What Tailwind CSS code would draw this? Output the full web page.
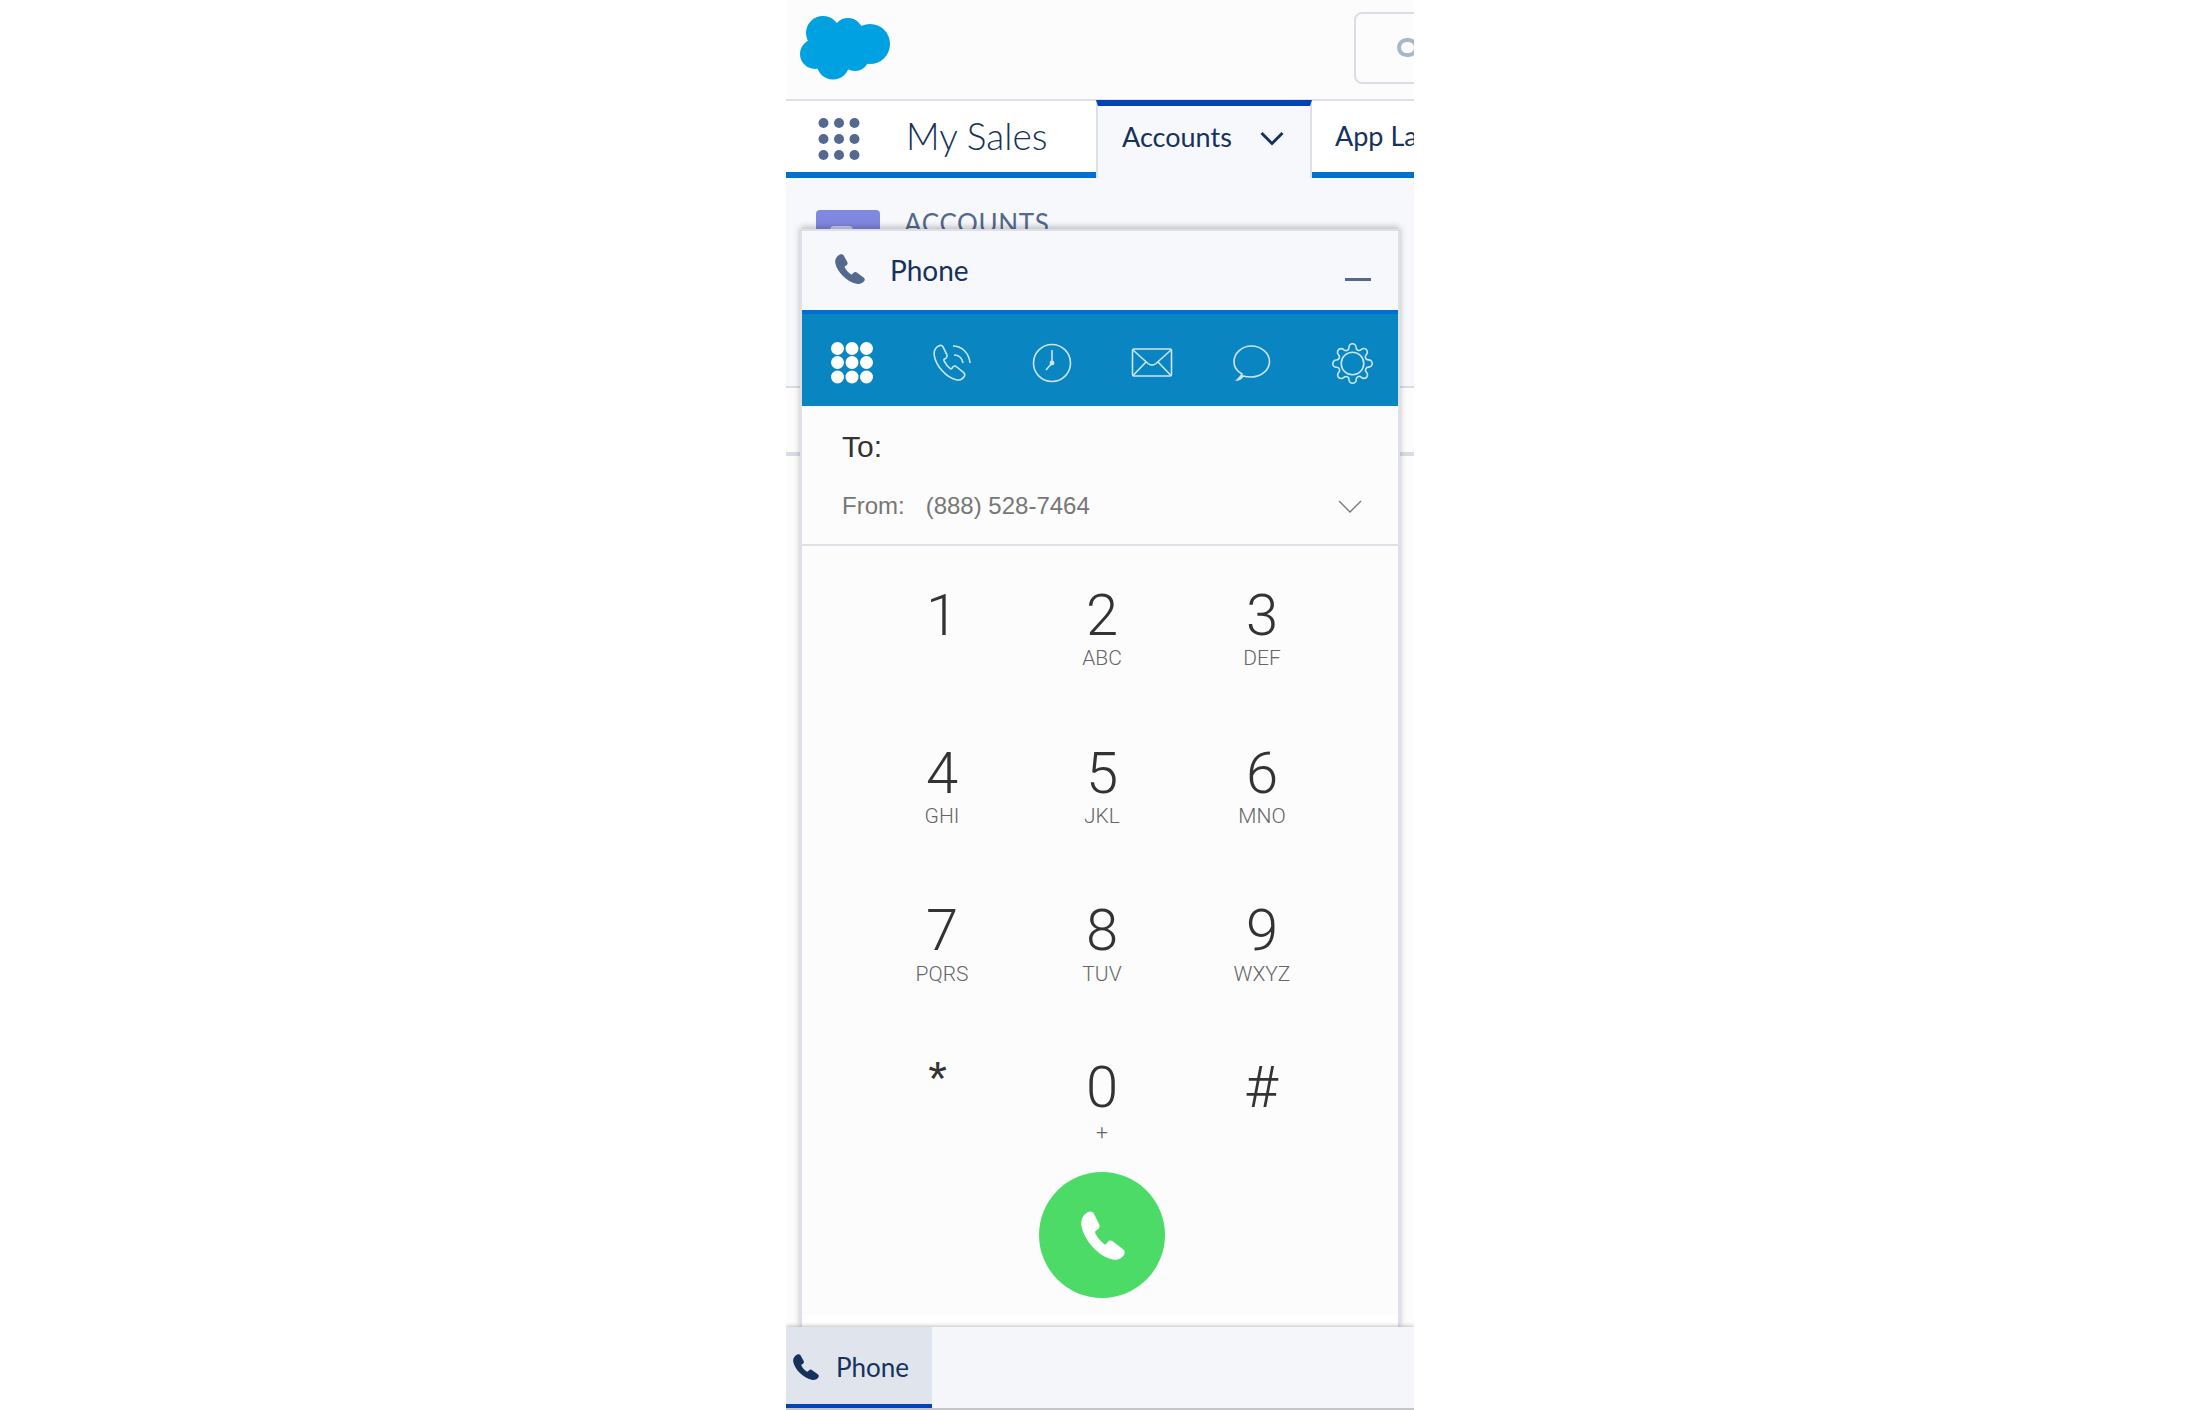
<!DOCTYPE html>
<html lang="en">
 <head>
  <meta charset="UTF-8" />
  <meta name="viewport" content="width=device-width, initial-scale=1.0" />
  <script src="https://cdn.jsdelivr.net/npm/@tailwindcss/browser@4"></script>
  <title>My Sales - Phone</title>
 </head>
 <body class="bg-white font-[Lato] text-[#16325c] overflow-hidden">
  <div class="flex justify-center w-full h-[1410px]">
   <div class="relative flex flex-col w-[628px] h-[1410px] overflow-hidden bg-[#fcfcfd]">

    <!-- top header -->
    <header class="flex justify-between h-[99px] shrink-0 bg-[#fcfcfd]">
     <svg class="ml-[13px] mt-[15px] w-[93px] h-[66px]" viewBox="799 15 93 66" fill="#00a1e0">
      <circle cx="823" cy="33" r="17" /><circle cx="848" cy="33" r="15" /><circle cx="870" cy="44" r="20" />
      <circle cx="815" cy="54" r="15" /><circle cx="833" cy="63" r="16.5" /><circle cx="855" cy="57" r="14" />
      <rect x="815" y="32" width="45" height="28" />
     </svg>
     <div class="mt-[12px] -mr-[20px] w-[80px] h-[72px] flex items-center pl-[41px] pb-[2px] border-2 border-[#d8dde6] rounded-lg">
      <div class="w-[21px] h-[19px] shrink-0 rounded-full border-4 border-[#a8b7c7]"></div>
     </div>
    </header>

    <!-- nav -->
    <nav class="flex h-[79px] shrink-0 bg-white border-t-2 border-[#dde0e6]">
     <div class="flex items-center w-[310px] border-b-[6px] border-[#0070d2] pb-[2px]">
      <svg class="ml-[32px] mt-[7px] w-[42px] h-[42px]" viewBox="0 0 42 42" fill="#54698d">
       <circle cx="5.5" cy="5" r="5" /><circle cx="21" cy="5" r="5" /><circle cx="36.5" cy="5" r="5" />
       <circle cx="5.5" cy="21" r="5" /><circle cx="21" cy="21" r="5" /><circle cx="36.5" cy="21" r="5" />
       <circle cx="5.5" cy="37" r="5" /><circle cx="21" cy="37" r="5" /><circle cx="36.5" cy="37" r="5" />
      </svg>
      <span class="ml-[46px] text-[37px] leading-none font-light whitespace-nowrap">My Sales</span>
     </div>
     <div class="flex items-center w-[216px] -mt-[1px] pb-[12px] bg-[#f7f8fb] border-t-[6px] border-t-[#0343b8] border-x-2 border-x-[#dde0e6]">
      <span class="ml-[24px] text-[27px] leading-none whitespace-nowrap">Accounts</span>
      <svg class="ml-[28px] mt-[5px] w-[24px] h-[15px]" viewBox="0 0 24 15" fill="none" stroke="#16325c" stroke-width="3"><path d="M1.5 2 12 12.5 22.5 2" /></svg>
     </div>
     <div class="flex items-center flex-1 border-b-[6px] border-[#0070d2] pb-[2px] overflow-hidden">
      <span class="ml-[23px] text-[27px] leading-none whitespace-nowrap">App Launcher</span>
     </div>
    </nav>

    <!-- page behind the phone panel -->
    <main class="relative flex-1 flex flex-col">
     <div class="flex h-[210px] shrink-0 pl-[30px] pt-[32px] bg-[#f7f8fb] border-b-2 border-[#d8dce6]">
      <div class="relative w-[64px] h-[40px] rounded bg-[#8088e0]">
       <div class="absolute left-[14px] top-[16px] w-[23px] h-[8px] rounded-sm bg-white/60"></div>
      </div>
      <span class="ml-[24px] -mt-[5px] text-[26px] leading-[36px] tracking-wide text-[#54698d]">ACCOUNTS</span>
     </div>
     <div class="h-[68px] shrink-0 border-b-4 border-[#d8dce6]"></div>

     <!-- phone panel -->
     <section class="absolute left-[14px] top-[51px] w-[600px] h-[1100px] flex flex-col border-2 border-[#dde0e8] rounded-t bg-white shadow-[0_-2px_6px_rgba(0,0,0,0.25)]">
      <div class="flex items-center h-[79px] shrink-0 bg-[#f7f8fb]">
       <svg class="ml-[33px] mb-[4px] w-[30px] h-[30px]" viewBox="0 0 30 30" fill="#54698d"><path d="M4.5.8C6.5-.2 8.2.5 9 2l3.3 6c.7 1.3.3 2.6-1 3.4l-1.3.8c-.5.3-.5.8-.2 1.4 1.5 2.8 3.4 4.8 6 6.6.6.4 1.1.3 1.5-.2l1-1.1c1-1.1 2.4-1.2 3.5-.3l6.8 4.8c1.4 1.1 1.6 2.6.4 3.9-2 2.3-4.5 3-7.5 2.4C12 27.8 2 18 .3 9-.3 5.6 1.3 2.5 4.5.8Z" /></svg>
       <span class="ml-[25px] mb-[2px] text-[28px] leading-none">Phone</span>
       <div class="ml-auto mr-[27px] mt-[18px] w-[26px] h-[3px] bg-[#54698d]"></div>
      </div>

      <!-- toolbar -->
      <div class="flex items-center h-[96px] shrink-0 pt-[6px] bg-[#0985c1] border-t-4 border-[#0070d2] overflow-visible">
       <div class="flex justify-center w-[100px] shrink-0">
        <svg class="w-[42px] h-[42px]" viewBox="0 0 42 42" fill="#fff">
         <circle cx="6.5" cy="6.5" r="6.5" /><circle cx="21" cy="6.5" r="6.5" /><circle cx="35.5" cy="6.5" r="6.5" />
         <circle cx="6.5" cy="20.5" r="6.5" /><circle cx="21" cy="20.5" r="6.5" /><circle cx="35.5" cy="20.5" r="6.5" />
         <circle cx="6.5" cy="35" r="6.5" /><circle cx="21" cy="35" r="6.5" /><circle cx="35.5" cy="35" r="6.5" />
        </svg>
       </div>
       <div class="flex justify-center w-[100px] shrink-0">
        <svg class="w-[38px] h-[38px]" viewBox="0 0 38 38" fill="none" stroke="#cde5f1" stroke-width="1.6">
         <path vector-effect="non-scaling-stroke" transform="translate(1 1) scale(1.03 1.17)" d="M4.5.8C6.5-.2 8.2.5 9 2l3.3 6c.7 1.3.3 2.6-1 3.4l-1.3.8c-.5.3-.5.8-.2 1.4 1.5 2.8 3.4 4.8 6 6.6.6.4 1.1.3 1.5-.2l1-1.1c1-1.1 2.4-1.2 3.5-.3l6.8 4.8c1.4 1.1 1.6 2.6.4 3.9-2 2.3-4.5 3-7.5 2.4C12 27.8 2 18 .3 9-.3 5.6 1.3 2.5 4.5.8Z" />
         <path d="M20 2C29 2 36 9 37 19" /><path d="M21 11C26 11 29 14 30 19" />
        </svg>
       </div>
       <div class="flex justify-center w-[100px] shrink-0">
        <svg class="w-[40px] h-[40px]" viewBox="0 0 40 40" fill="none" stroke="#cde5f1" stroke-width="1.6">
         <circle cx="20" cy="20" r="18.5" /><path d="M20 7V20L14 27" /><circle cx="20" cy="20" r="1.6" fill="#cde5f1" />
        </svg>
       </div>
       <div class="flex justify-center w-[100px] shrink-0">
        <svg class="w-[42px] h-[30px]" viewBox="0 0 42 30" fill="none" stroke="#cde5f1" stroke-width="1.6">
         <rect x="1.5" y="1" width="39" height="27" rx="1.5" />
         <path d="M2 2 17 15.5C19.5 17.5 22.5 17.5 25 15.5L40 2M2 27.5 15 14M40 27.5 27 14" />
        </svg>
       </div>
       <div class="flex justify-center w-[100px] shrink-0">
        <svg class="w-[38px] h-[36px]" viewBox="0 0 38 36" fill="none" stroke="#cde5f1" stroke-width="1.6">
         <path d="M9 29C3.5 26 1 21 1 17 1 8 9 1 18.5 1 28 1 36.5 8 36.5 16.5 36.5 25 28 32 18.5 32 15 32 12 31.6 10 31 8.5 33 7 35 4 35 6 33 8.5 31 9 29Z" />
        </svg>
       </div>
       <div class="flex justify-center w-[100px] shrink-0">
        <svg class="w-[43px] h-[43px]" viewBox="0 0 24 24" fill="none" stroke="#cde5f1" stroke-width="0.9">
         <circle cx="12" cy="12" r="6.3" />
         <path d="M19.4 15a1.65 1.65 0 0 0 .33 1.82l.06.06a2 2 0 0 1 0 2.83 2 2 0 0 1-2.83 0l-.06-.06a1.65 1.65 0 0 0-1.82-.33 1.65 1.65 0 0 0-1 1.51V21a2 2 0 0 1-2 2 2 2 0 0 1-2-2v-.09A1.65 1.65 0 0 0 9 19.4a1.65 1.65 0 0 0-1.82.33l-.06.06a2 2 0 0 1-2.83 0 2 2 0 0 1 0-2.83l.06-.06a1.65 1.65 0 0 0 .33-1.82 1.65 1.65 0 0 0-1.51-1H3a2 2 0 0 1-2-2 2 2 0 0 1 2-2h.09A1.65 1.65 0 0 0 4.6 9a1.65 1.65 0 0 0-.33-1.82l-.06-.06a2 2 0 0 1 0-2.83 2 2 0 0 1 2.83 0l.06.06a1.65 1.65 0 0 0 1.82.33H9a1.65 1.65 0 0 0 1-1.51V3a2 2 0 0 1 2-2 2 2 0 0 1 2 2v.09a1.65 1.65 0 0 0 1 1.51 1.65 1.65 0 0 0 1.82-.33l.06-.06a2 2 0 0 1 2.83 0 2 2 0 0 1 0 2.83l-.06.06a1.65 1.65 0 0 0-.33 1.82V9a1.65 1.65 0 0 0 1.51 1H21a2 2 0 0 1 2 2 2 2 0 0 1-2 2h-.09a1.65 1.65 0 0 0-1.51 1z" />
        </svg>
       </div>
      </div>

      <!-- number fields -->
      <div class="flex flex-col shrink-0 bg-[#fcfcfc] border-b-2 border-[#dfe1e6] font-['Liberation_Sans']">
       <div class="flex items-center h-[78px] pl-[40px] pt-[2px] text-[30px] text-[#333]">To:</div>
       <div class="flex items-center h-[60px] pl-[40px] pb-[16px] text-[24px] text-[#777]">
        <span>From:</span>
        <span class="ml-[21px]">(888) 528-7464</span>
        <svg class="ml-auto mr-[36px] w-[24px] h-[13px]" viewBox="0 0 24 13" fill="none" stroke="#777" stroke-width="1.4"><path d="M1 1 12 12 23 1" /></svg>
       </div>
      </div>

      <!-- keypad -->
      <div class="flex flex-col items-center flex-1 bg-[#fcfcfc] font-[Roboto] pt-[39px] pl-[4px]">
       <div class="grid grid-cols-[160px_160px_160px] grid-rows-[158px_158px_158px_113px] text-center">
        <div><div class="text-[58px] leading-[60px] font-light text-[#333]">1</div></div>
        <div><div class="text-[58px] leading-[60px] font-light text-[#333]">2</div><div class="mt-[1px] text-[21px] leading-[24px] font-light text-[#666]">ABC</div></div>
        <div><div class="text-[58px] leading-[60px] font-light text-[#333]">3</div><div class="mt-[1px] text-[21px] leading-[24px] font-light text-[#666]">DEF</div></div>
        <div><div class="text-[58px] leading-[60px] font-light text-[#333]">4</div><div class="mt-[1px] text-[21px] leading-[24px] font-light text-[#666]">GHI</div></div>
        <div><div class="text-[58px] leading-[60px] font-light text-[#333]">5</div><div class="mt-[1px] text-[21px] leading-[24px] font-light text-[#666]">JKL</div></div>
        <div><div class="text-[58px] leading-[60px] font-light text-[#333]">6</div><div class="mt-[1px] text-[21px] leading-[24px] font-light text-[#666]">MNO</div></div>
        <div><div class="-mt-[1px] text-[58px] leading-[60px] font-light text-[#333]">7</div><div class="mt-[2px] text-[21px] leading-[24px] font-light text-[#666]">PQRS</div></div>
        <div><div class="-mt-[1px] text-[58px] leading-[60px] font-light text-[#333]">8</div><div class="mt-[2px] text-[21px] leading-[24px] font-light text-[#666]">TUV</div></div>
        <div><div class="-mt-[1px] text-[58px] leading-[60px] font-light text-[#333]">9</div><div class="mt-[2px] text-[21px] leading-[24px] font-light text-[#666]">WXYZ</div></div>
        <div class="pr-[9px]"><div class="-mt-[10px] font-['Liberation_Sans'] text-[48px] leading-[60px] text-[#333]">*</div></div>
        <div><div class="-mt-[2px] text-[58px] leading-[60px] font-light text-[#333]">0</div><div class="mt-[3px] text-[21px] leading-[24px] font-light text-[#666]">+</div></div>
        <div class="pr-[2px]"><div class="-mt-[2px] text-[58px] leading-[60px] font-light text-[#333]">#</div></div>
       </div>
       <div class="flex items-center justify-center w-[126px] h-[126px] shrink-0 rounded-full bg-[#4cdb67]">
        <svg class="ml-[2px] w-[44px] h-[49px]" viewBox="0 0 30 30" preserveAspectRatio="none" fill="#fff"><path d="M4.5.8C6.5-.2 8.2.5 9 2l3.3 6c.7 1.3.3 2.6-1 3.4l-1.3.8c-.5.3-.5.8-.2 1.4 1.5 2.8 3.4 4.8 6 6.6.6.4 1.1.3 1.5-.2l1-1.1c1-1.1 2.4-1.2 3.5-.3l6.8 4.8c1.4 1.1 1.6 2.6.4 3.9-2 2.3-4.5 3-7.5 2.4C12 27.8 2 18 .3 9-.3 5.6 1.3 2.5 4.5.8Z" /></svg>
       </div>
       <div class="h-[16px] shrink-0"></div>
      </div>
      <div class="h-[12px] shrink-0 bg-white"></div>
     </section>
    </main>

    <!-- utility bar -->
    <footer class="relative z-10 flex h-[83px] shrink-0 bg-[#f4f6fa] border-b-2 border-[#c4c6ca] shadow-[0_-1px_4px_rgba(0,0,0,0.25)]">
     <div class="flex items-center w-[146px] bg-[#e0e4ed] border-b-4 border-[#0343b8]">
      <svg class="ml-[7px] mt-[2px] w-[26px] h-[26px]" viewBox="0 0 30 30" fill="#16325c"><path d="M4.5.8C6.5-.2 8.2.5 9 2l3.3 6c.7 1.3.3 2.6-1 3.4l-1.3.8c-.5.3-.5.8-.2 1.4 1.5 2.8 3.4 4.8 6 6.6.6.4 1.1.3 1.5-.2l1-1.1c1-1.1 2.4-1.2 3.5-.3l6.8 4.8c1.4 1.1 1.6 2.6.4 3.9-2 2.3-4.5 3-7.5 2.4C12 27.8 2 18 .3 9-.3 5.6 1.3 2.5 4.5.8Z" /></svg>
      <span class="ml-[17px] mt-[2px] text-[26px] leading-none">Phone</span>
     </div>
    </footer>
   </div>
  </div>
 </body>
</html>
